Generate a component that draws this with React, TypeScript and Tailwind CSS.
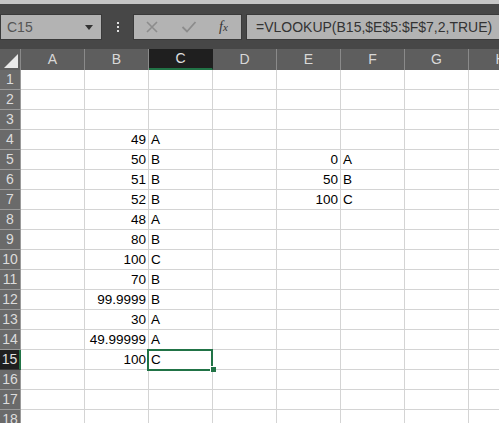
import React from "react";

const COLS = ["A", "B", "C", "D", "E", "F", "G", "H"];
const ROWS = 18;

// cell values keyed by "col+row"
const values: Record<string, string> = {
  B4: "49", C4: "A",
  B5: "50", C5: "B",
  B6: "51", C6: "B",
  B7: "52", C7: "B",
  B8: "48", C8: "A",
  B9: "80", C9: "B",
  B10: "100", C10: "C",
  B11: "70", C11: "B",
  B12: "99.9999", C12: "B",
  B13: "30", C13: "A",
  B14: "49.99999", C14: "A",
  B15: "100", C15: "C",
  E5: "0", F5: "A",
  E6: "50", F6: "B",
  E7: "100", F7: "C",
};

const numeric = (v: string) => /^[0-9.]+$/.test(v);

function FormulaBar() {
  return (
    <div className="h-[45px] bg-[#474747] flex items-start pt-[10px] relative">
      <div className="w-[102px] h-[26px] bg-[#b3b3b3] border border-[#3a3a3a] flex items-center pl-[6px] pr-[6px] justify-between">
        <span className="text-[14px] text-[#555] leading-none">C15</span>
        <svg width="8" height="5" viewBox="0 0 8 5" className="mr-[2px]">
          <path d="M0 0 H8 L4 5 Z" fill="#333" />
        </svg>
      </div>
      <div className="w-[31px] h-[26px] flex flex-col items-center justify-center gap-[2px]">
        <div className="w-[2px] h-[2px] bg-[#e0e0e0]" />
        <div className="w-[2px] h-[2px] bg-[#e0e0e0]" />
        <div className="w-[2px] h-[2px] bg-[#e0e0e0]" />
      </div>
      <div className="w-[109px] h-[26px] bg-[#b3b3b3] border border-[#3a3a3a] flex items-center">
        <svg width="14" height="14" viewBox="0 0 14 14" className="ml-[11px]">
          <path d="M2 2 L12 12 M12 2 L2 12" stroke="#8c8c8c" strokeWidth="1.6" />
        </svg>
        <svg width="16" height="14" viewBox="0 0 16 14" className="ml-[22px]">
          <path d="M1.5 7 L6 11.5 L14.5 2" stroke="#8c8c8c" strokeWidth="1.8" fill="none" />
        </svg>
        <span className="ml-[22px] text-[14px] italic text-[#333] leading-none" style={{ fontFamily: '"Liberation Serif", serif' }}>
          f<span className="text-[11px]">x</span>
        </span>
      </div>
      <div className="ml-[4px] flex-1 h-[26px] bg-[#b3b3b3] border border-[#3a3a3a] border-r-0 flex items-center pl-[9px]">
        <span className="text-[14px] text-[#333] leading-none">=VLOOKUP(B15,$E$5:$F$7,2,TRUE)</span>
      </div>
    </div>
  );
}

function HeaderRow() {
  return (
    <div className="flex h-[21px] bg-[#5e5e5e]">
      <div className="w-[21px] shrink-0 relative border-r border-[#8a8a8a]">
        <svg width="14" height="14" viewBox="0 0 14 14" className="absolute right-[2px] bottom-[2px]">
          <path d="M14 0 L14 14 L0 14 Z" fill="#e8e8e8" />
        </svg>
      </div>
      {COLS.map((c) => (
        <div
          key={c}
          className={
            "w-[64px] shrink-0 flex items-center justify-center text-[14px] border-r " +
            (c === "C"
              ? "bg-[#1f1f1f] text-[#e0e0e0] border-[#1f1f1f] border-b-2 border-b-[#217346]"
              : "text-[#d8d8d8] border-[#8a8a8a]")
          }
        >
          {c}
        </div>
      ))}
    </div>
  );
}

function Row({ n }: { n: number }) {
  const sel = n === 15;
  return (
    <div className="flex h-[20px]">
      <div
        className={
          "w-[21px] shrink-0 flex items-center justify-center text-[14px] border-b " +
          (sel
            ? "bg-[#1f1f1f] text-[#e0e0e0] border-[#3a3a3a] border-r-2 border-r-[#217346]"
            : "bg-[#6a6a6a] text-[#dcdcdc] border-[#9a9a9a] border-r border-r-[#9a9a9a]")
        }
      >
        {n}
      </div>
      {COLS.map((c) => {
        const v = values[c + n] ?? "";
        const isSel = sel && c === "C";
        return (
          <div
            key={c}
            className={
              "w-[64px] shrink-0 bg-white border-r border-b border-[#d4d4d4] flex items-center pt-[2px] px-[2px] text-[13.5px] text-black relative " +
              (numeric(v) ? "justify-end" : "justify-start") +
              (isSel ? " z-10" : "")
            }
          >
            {v}
            {isSel && (
              <>
                <div className="absolute -left-[2px] -top-[1px] w-[66px] h-[22px] border-2 border-[#217346]" />
                <div className="absolute left-[61px] top-[16px] w-[6px] h-[6px] bg-[#217346] border-l border-t border-white" />
              </>
            )}
          </div>
        );
      })}
    </div>
  );
}

export default function App() {
  return (
    <div
      className="w-[499px] h-[423px] overflow-hidden bg-white"
      style={{ fontFamily: '"Liberation Sans", Arial, sans-serif' }}
    >
      <div className="h-[4px] bg-[#c6c6c6]" />
      <FormulaBar />
      <HeaderRow />
      {Array.from({ length: ROWS }, (_, i) => (
        <Row key={i} n={i + 1} />
      ))}
    </div>
  );
}
